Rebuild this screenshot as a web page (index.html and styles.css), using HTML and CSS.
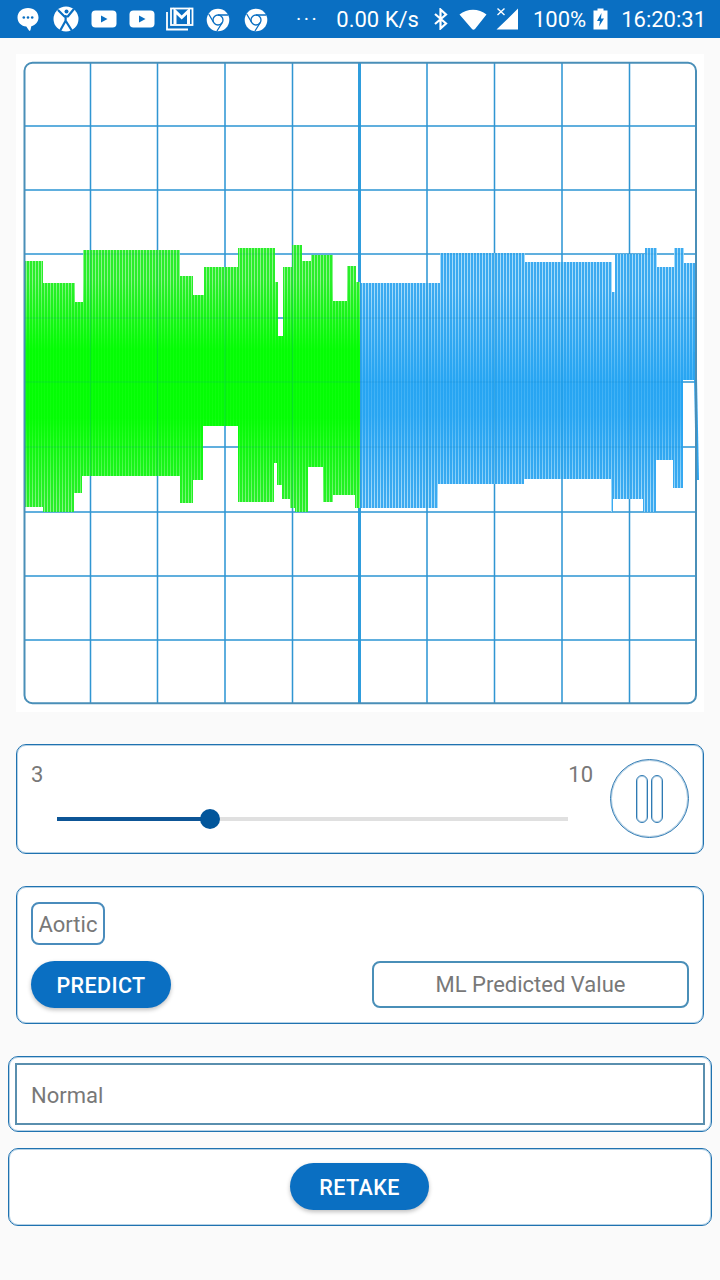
FILE: index.html
```html
<!DOCTYPE html>
<html lang="en">
<head>
<meta charset="utf-8">
<title>Recording</title>
<link rel="stylesheet" href="styles.css">
</head>
<body>
<header class="status">
  <div class="status-left">
    <svg class="ic" width="24" height="26" viewBox="0 0 24 26"><path fill="#fff" d="M12 2C5.900 2 1.500 6 1.500 11.400c0 5 3.800 8.600 8.800 9.200L13 24.500c.6.700 1.300.4 1.500-.4l.8-3.800c4.400-1.300 7.200-4.700 7.200-8.900C22.500 6 18.100 2 12 2z"/><circle fill="#0a6fc2" cx="7.800" cy="11.500" r="1.300"/><circle fill="#0a6fc2" cx="12" cy="11.500" r="1.300"/><circle fill="#0a6fc2" cx="16.200" cy="11.500" r="1.300"/></svg>
    <svg class="ic" width="26" height="26" viewBox="0 0 26 26"><circle fill="#fff" cx="13" cy="13" r="12.500"/><g fill="none" stroke="#0a6fc2" stroke-width="2.200" stroke-linecap="round"><path d="M5.500 4.500 L11.500 10.500 M20.500 3.500 L14.800 10.500 M12.800 10 L12.500 15 M12.500 15 L7.500 24 M12.800 15 L18.500 24"/></g><circle fill="#0a6fc2" cx="13.500" cy="5.500" r="2"/></svg>
    <svg class="ic" width="26" height="18" viewBox="0 0 26 18"><rect fill="#fff" x="0.500" y="0.500" width="25" height="17" rx="4"/><path fill="#0a6fc2" d="M10 5.500 L16.500 9 L10 12.500z"/></svg>
    <svg class="ic" width="26" height="18" viewBox="0 0 26 18"><rect fill="#fff" x="0.500" y="0.500" width="25" height="17" rx="4"/><path fill="#0a6fc2" d="M10 5.500 L16.500 9 L10 12.500z"/></svg>
    <svg class="ic" width="28" height="24" viewBox="0 0 28 24"><path fill="none" stroke="#fff" stroke-width="1.800" d="M1 5 V22.500 H22"/><rect fill="none" stroke="#fff" stroke-width="1.800" x="5" y="1.500" width="21.500" height="16.500"/><path fill="none" stroke="#fff" stroke-width="3" d="M9 17 V4 L15.700 10.500 L22.500 4 V17"/></svg>
    <svg class="ic ic-low" width="24" height="24" viewBox="0 0 24 24"><circle fill="#fff" cx="12" cy="12" r="11.300"/><g fill="none" stroke="#0a6fc2" stroke-width="1.300"><circle cx="12" cy="12" r="5"/><path d="M12 7 H22 M16.300 14.500 L11 23 M7.700 14.500 L2.700 6"/></g></svg>
    <svg class="ic ic-low" width="24" height="24" viewBox="0 0 24 24"><circle fill="#fff" cx="12" cy="12" r="11.300"/><g fill="none" stroke="#0a6fc2" stroke-width="1.300"><circle cx="12" cy="12" r="5"/><path d="M12 7 H22 M16.300 14.500 L11 23 M7.700 14.500 L2.700 6"/></g></svg>
    <span class="dots">···</span>
  </div>
  <div class="status-right">
    <span class="speed">0.00 K/s</span>
    <svg class="ic" width="16" height="22" viewBox="0 0 16 22"><path fill="none" stroke="#fff" stroke-width="2.200" d="M2 6 L13 15.500 L7.500 20.500 V1.500 L13 6.500 L2 16"/></svg>
    <svg class="ic ic-wifi" width="28" height="21" viewBox="0 0 28 21"><path fill="#fff" d="M0.500 5.500 C8 -1 20 -1 27.500 5.500 L16 20 C15 21 13.800 21 13 20z"/></svg>
    <svg class="ic" width="24" height="24" viewBox="0 0 24 24"><path fill="#fff" d="M23 1.500 V22.500 H1.500 L12.500 12z"/><path fill="none" stroke="#fff" stroke-width="1.400" d="M2.500 1.500 L9.500 8 M9.500 1.500 L2.500 8"/></svg>
    <span class="batt-text">100%</span>
    <svg class="ic" width="15" height="22" viewBox="0 0 15 22"><path fill="#fff" d="M4.500 0.500 H10.500 V2.500 H14.500 V21.500 H0.500 V2.500 H4.500z"/><path fill="#0a6fc2" d="M8.500 5 L4 13 H7 L6 18.500 L11 10.500 H8z"/></svg>
    <span class="time">16:20:31</span>
  </div>
</header>

<main class="page">
  <section class="chart-panel">
    <svg class="chart" width="672" height="642" viewBox="24 62 672 642">
      <defs>
        <pattern id="stripeGreen" patternUnits="userSpaceOnUse" width="3" height="8">
          <rect width="3" height="8" fill="#8af58a"/>
          <rect width="2" height="8" fill="#2aee2a"/>
        </pattern>
        <pattern id="stripeBlue" patternUnits="userSpaceOnUse" width="3" height="8">
          <rect width="3" height="8" fill="#a5dcfb"/>
          <rect width="2" height="8" fill="#3caaf0"/>
        </pattern>
        <linearGradient id="coreGreen" gradientUnits="userSpaceOnUse" x1="0" y1="280" x2="0" y2="510">
          <stop offset="0" stop-color="#00ff00" stop-opacity="0"/>
          <stop offset="0.300" stop-color="#00ff00" stop-opacity="0.900"/>
          <stop offset="0.600" stop-color="#00ff00" stop-opacity="0.900"/>
          <stop offset="1" stop-color="#00ff00" stop-opacity="0"/>
        </linearGradient>
        <linearGradient id="coreBlue" gradientUnits="userSpaceOnUse" x1="0" y1="290" x2="0" y2="500">
          <stop offset="0" stop-color="#1fa3f3" stop-opacity="0"/>
          <stop offset="0.450" stop-color="#1fa3f3" stop-opacity="0.750"/>
          <stop offset="0.600" stop-color="#1fa3f3" stop-opacity="0.700"/>
          <stop offset="1" stop-color="#1fa3f3" stop-opacity="0"/>
        </linearGradient>
        <g id="grid">
          <path d="M90.500 62V704M157.500 62V704M225 62V704M292.500 62V704M427 62V704M494.500 62V704M562 62V704M629.500 62V704M24 126H696M24 190H696M24 254H696M24 318H696M24 382H696M24 447H696M24 512H696M24 576H696M24 640H696"/>
        </g>
      </defs>
      <rect x="24" y="62" width="672" height="642" rx="8" fill="#fff"/>
      <use href="#grid" fill="none" stroke="#3a9ddb" stroke-width="1.500"/>
      <path d="M359.500 62V704" stroke="#2f9ddd" stroke-width="3" fill="none"/>
      <path fill="url(#stripeGreen)" d="M24 261H43V283H75V302H83V250H180V276H193V295H204V267H238V248H275V282H278V336H283V267H292V245H302V261H311V255H333V301H347V266H356V282H360V508H355V495H333V502H323V467H308V512H295V508H290V499H282V485H277V463H274V502H238V426H203V480H193V503H180V476H82V493H74V512H43V507H24Z"/>
      <path fill="url(#coreGreen)" d="M24 261H43V283H75V302H83V250H180V276H193V295H204V267H238V248H275V282H278V336H283V267H292V245H302V261H311V255H333V301H347V266H356V282H360V508H355V495H333V502H323V467H308V512H295V508H290V499H282V485H277V463H274V502H238V426H203V480H193V503H180V476H82V493H74V512H43V507H24Z"/>
      <path fill="url(#stripeBlue)" d="M361 283H440V253H525V262H612V292H615V254H645V248H657V267H674V248H684V263H695V380H683V488H673V460H656V512H643V499H613V512H611V479H524V484H438V508H361Z"/>
      <path fill="url(#coreBlue)" d="M361 283H440V253H525V262H612V292H615V254H645V248H657V267H674V248H684V263H695V380H683V488H673V460H656V512H643V499H613V512H611V479H524V484H438V508H361Z"/>
      <path d="M695 352L697.500 480" stroke="#2ba3ee" stroke-width="3" fill="none"/>
      <use href="#grid" fill="none" stroke="#0a7fb0" stroke-width="1.200" stroke-opacity="0.200"/>
      <rect x="24.500" y="62.750" width="671.500" height="640.500" rx="8" fill="none" stroke="#4a8fb8" stroke-width="2"/>
    </svg>
  </section>

  <section class="card card-slider">
    <div class="slider-col">
      <div class="slider-labels"><span>3</span><span>10</span></div>
      <div class="track"><div class="track-fill"></div><div class="thumb"></div></div>
    </div>
    <button class="pause" aria-label="Pause"><span class="pause-bar"></span><span class="pause-bar"></span></button>
  </section>

  <section class="card card-predict">
    <div class="chip">Aortic</div>
    <div class="predict-row">
      <button class="btn">PREDICT</button>
      <div class="value-box">ML Predicted Value</div>
    </div>
  </section>

  <section class="card card-wide card-result">
    <div class="result-input">Normal</div>
  </section>

  <section class="card card-wide card-retake">
    <button class="btn btn-retake">RETAKE</button>
  </section>
</main>
</body>
</html>
```

FILE: styles.css
```css
* { box-sizing: border-box; }
html, body { margin: 0; padding: 0; }
body {
  width: 720px;
  height: 1280px;
  background: #fafafa;
  font-family: Roboto, "Noto Sans", sans-serif;
  color: #787878;
  overflow: hidden;
}

.status {
  height: 38px;
  background: #0a6fc2;
  color: #fff;
  display: flex;
  align-items: center;
  justify-content: space-between;
  padding: 0 14px 0 9px;
  font-size: 22px;
}
.status-left, .status-right { display: flex; align-items: center; }
.status-left .ic { width: 38px; }
.status-left .ic-low { margin-top: 2px; }
.status-right { gap: 8px; }
.ic { display: block; flex: none; }
.dots { margin-left: 21px; font-size: 20px; letter-spacing: 2.500px; margin-right: 7px; }
.speed { margin-right: 6px; }
.ic-wifi { margin-left: 2px; }
.batt-text { margin-left: 6px; margin-right: -1px; }
.time { margin-left: 5px; }

.page { display: flex; flex-direction: column; }

.chart-panel {
  margin: 16px 16px 0;
  height: 658px;
  padding: 8px;
  background: #fff;
}
.chart { display: block; overflow: visible; }

.card {
  background: #fff;
  border: 1px solid #1f72b0;
  box-shadow: inset 0 0 0 1px rgba(42, 122, 181, 0.35);
  border-radius: 10px;
  margin: 0 16px;
}
.card-wide { margin: 0 8px; }

.card-slider {
  margin-top: 32px;
  height: 110px;
  display: flex;
  padding: 15px 14px 0 13px;
}
.slider-col { width: 563px; }
.slider-labels {
  display: flex;
  justify-content: space-between;
  padding-left: 1px;
  font-size: 22px;
  line-height: 30px;
}
.track {
  position: relative;
  height: 4px;
  margin: 27px 0 0 27px;
  width: 511px;
  background: #e0e0e0;
}
.track-fill { width: 153px; height: 4px; background: #0d5596; }
.thumb {
  position: absolute;
  left: 143px;
  top: -8px;
  width: 20px;
  height: 20px;
  border-radius: 50%;
  background: #02569b;
}
.pause {
  width: 79px;
  height: 79px;
  margin: -1px 0 0 17px;
  padding: 0;
  border: 1px solid #2f7ab3;
  box-shadow: inset 0 0 0 1px rgba(47, 122, 179, 0.35);
  border-radius: 50%;
  background: #fff;
  display: flex;
  align-items: center;
  justify-content: center;
  gap: 3px;
}
.pause-bar {
  width: 12px;
  height: 48px;
  border: 1px solid #2f7ab3;
  box-shadow: inset 0 0 0 1px rgba(47, 122, 179, 0.35);
  border-radius: 6px;
}

.card-predict {
  margin-top: 32px;
  height: 138px;
  padding: 15px 14px 0;
}
.chip {
  width: 74px;
  height: 43px;
  border: 2px solid #4a8cbc;
  border-radius: 8px;
  font-size: 22px;
  line-height: 42px;
  text-align: center;
}
.predict-row {
  display: flex;
  justify-content: space-between;
  margin-top: 16px;
}
.btn {
  height: 47px;
  width: 140px;
  border: 0;
  padding: 2px 0 0;
  border-radius: 24px;
  background: #0a6fc2;
  color: #fff;
  font-family: Roboto, "Noto Sans", sans-serif;
  font-size: 21.500px;
  font-weight: 500;
  letter-spacing: 0.400px;
  box-shadow: 0 2px 4px rgba(0, 0, 0, 0.25);
}
.btn-retake { width: 139px; margin-right: 1px; }
.value-box {
  width: 317px;
  height: 47px;
  border: 2px solid #4a8fb8;
  border-radius: 8px;
  font-size: 22px;
  line-height: 44px;
  text-align: center;
}

.card-result {
  margin-top: 32px;
  height: 76px;
  padding: 6px;
}
.result-input {
  height: 62px;
  border: 2px solid #5a8fae;
  padding-left: 14px;
  font-size: 22px;
  line-height: 61px;
}
.card-retake {
  margin-top: 16px;
  height: 78px;
  display: flex;
  justify-content: center;
  padding-top: 14px;
}
```
